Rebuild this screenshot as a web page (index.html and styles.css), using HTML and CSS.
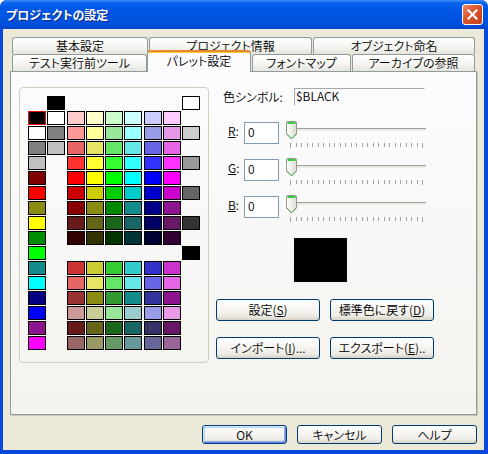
FILE: index.html
```html
<!DOCTYPE html>
<html>
<head>
  <meta charset='utf-8'>
  <title>プロジェクトの設定</title>
  <link rel="stylesheet" href="styles.css">
</head>
<body>
  <div class="window">
    <div class="titlebar">
      <span class="title">プロジェクトの設定</span>
      <span class="close">
        <svg width="11" height="11" viewBox="0 0 11 11"><path d="M1.5 1.5 L9.5 9.5 M9.5 1.5 L1.5 9.5" stroke="#fff" stroke-width="2.2" stroke-linecap="square"/></svg>
      </span>
    </div>
    <div class="frame">
      <div class="tabs">
        <div class="tab-row">
          <div class="tab" style="width:136px">基本設定</div>
          <div class="tab" style="width:163px">プロジェクト情報</div>
          <div class="tab" style="width:162px">オブジェクト命名</div>
        </div>
        <div class="tab-row">
          <div class="tab" style="width:135px">テスト実行前ツール</div>
          <div class="tab active" style="width:104px">パレット設定</div>
          <div class="tab" style="width:99px">フォントマップ</div>
          <div class="tab" style="width:123px">アーカイブの参照</div>
        </div>
      </div>
      <div class="panel">
        <div class="group">
          <div class="palette" id="palette"></div>
        </div>
        <div class="editor">
          <div class="symbol">
            <span class="symbol-label">色シンボル:</span>
            <span class="field">$BLACK</span>
          </div>
          <div class="channels">
            <div class="channel">
              <span class="channel-label"><u>R</u>:</span>
              <span class="num">0</span>
              <div class="slider">
                <div class="track"></div>
                <svg class="ticks" width="134" height="5"></svg>
                <svg class="thumb" width="11" height="19" viewBox="0 0 11 19"><use href="#thumbShape"/></svg>
              </div>
            </div>
            <div class="channel">
              <span class="channel-label"><u>G</u>:</span>
              <span class="num">0</span>
              <div class="slider">
                <div class="track"></div>
                <svg class="ticks" width="134" height="5"></svg>
                <svg class="thumb" width="11" height="19" viewBox="0 0 11 19"><use href="#thumbShape"/></svg>
              </div>
            </div>
            <div class="channel">
              <span class="channel-label"><u>B</u>:</span>
              <span class="num">0</span>
              <div class="slider">
                <div class="track"></div>
                <svg class="ticks" width="134" height="5"></svg>
                <svg class="thumb" width="11" height="19" viewBox="0 0 11 19"><use href="#thumbShape"/></svg>
              </div>
            </div>
          </div>
          <div class="preview"></div>
          <div class="buttons">
            <div class="btn big">設定(<u>S</u>)</div>
            <div class="btn big">標準色に戻す(<u>D</u>)</div>
            <div class="btn big">インポート(<u>I</u>)...</div>
            <div class="btn big">エクスポート(<u>E</u>)..</div>
          </div>
        </div>
      </div>
      <div class="actions">
        <div class="btn small default">OK</div>
        <div class="btn small">キャンセル</div>
        <div class="btn small">ヘルプ</div>
      </div>
    </div>
  </div>

  <svg width="0" height="0" class="defs">
    <defs>
      <linearGradient id="thumbFill" x1="0" y1="0" x2="1" y2="0">
        <stop offset="0" stop-color="#ffffff"/>
        <stop offset="1" stop-color="#dcdcd4"/>
      </linearGradient>
      <g id="thumbShape">
        <path d="M0.5 2 Q0.5 0.5 2 0.5 H9 Q10.5 0.5 10.5 2 V13 L5.5 18 L0.5 13 Z" fill="url(#thumbFill)" stroke="#8e9b8e"/>
        <path d="M1 13 L5.5 17.5 L10 13" fill="none" stroke="#4fae4f"/>
        <rect x="1.5" y="1" width="8" height="2" fill="#3ccb3c"/>
      </g>
    </defs>
  </svg>

  <script>
const _ = '';
const colors = [
  [_, '#000000', _, _, _, _, _, _, '#ffffff'],
  ['#000000', '#ffffff', '#ffcccc', '#ffffcc', '#ccffcc', '#ccffff', '#ccccff', '#ffccff', _],
  ['#ffffff', '#808080', '#ff9999', '#ffff99', '#99e699', '#99ffff', '#999ce6', '#e699e6', '#cccccc'],
  ['#808080', '#c0c0c0', '#e66666', '#e6e666', '#66e666', '#66e6e6', '#6666e6', '#e666e6', _],
  ['#c0c0c0', _, '#ff3333', '#ffff33', '#33ff33', '#33ffff', '#3333ff', '#ff33ff', '#999999'],
  ['#800000', _, '#ff0000', '#ffff00', '#00ff00', '#00ffff', '#0000ff', '#ff00ff', _],
  ['#ff0000', _, '#cc0000', '#cccc00', '#00cc00', '#00cccc', '#0000cc', '#cc00cc', '#666666'],
  ['#8c8c14', _, '#880000', '#8c8c14', '#008800', '#148c8c', '#000088', '#8c148c', _],
  ['#ffff00', _, '#661a1a', '#666619', '#1a661a', '#1a6666', '#000066', '#661a66', '#333333'],
  ['#008c00', _, '#330000', '#333300', '#003300', '#003333', '#000033', '#330033', _],
  ['#00ff00', _, _, _, _, _, _, _, '#000000'],
  ['#148c8c', _, '#cc3333', '#cccc33', '#33cc33', '#33cccc', '#3333cc', '#cc33cc', _],
  ['#00ffff', _, '#e66666', '#e6e666', '#66e666', '#66e6e6', '#6666e6', '#e666e6', _],
  ['#000080', _, '#993333', '#8c8c14', '#339933', '#148c8c', '#333399', '#8c148c', _],
  ['#0000ff', _, '#cc9999', '#cccc99', '#99e699', '#99cccc', '#999ce6', '#e699e6', _],
  ['#8c148c', _, '#661a1a', '#666619', '#1a661a', '#1a6666', '#333366', '#661a66', _],
  ['#ff00ff', _, '#996666', '#999966', '#669966', '#669999', '#666699', '#996699', _],
];

const palette = document.getElementById('palette');
colors.forEach((row, r) => {
  row.forEach((color, c) => {
    const cell = document.createElement('div');
    if (color) {
      cell.className = (r === 1 && c === 0) ? 'swatch selected' : 'swatch';
      cell.style.background = color;
    }
    palette.appendChild(cell);
  });
});

// slider tick marks, 0..255
document.querySelectorAll('.ticks').forEach((svg) => {
  let lines = '';
  for (let i = 0; i < 25; i++) {
    const x = Math.round(i * 5.5) + 0.5;
    const h = (i === 0 || i === 24) ? 5 : 4;
    lines += `<line x1="${x}" y1="0" x2="${x}" y2="${h}" stroke="#a3a39b"/>`;
  }
  svg.innerHTML = lines;
});
  </script>
</body>
</html>
```

FILE: styles.css
```css
body {
  margin: 0;
  background: #ffffff;
  font-family: "Noto Sans CJK JP", sans-serif;
  font-size: 12px;
  font-weight: 350;
  font-feature-settings: "palt";
  color: #000;
}
.defs {
  position: absolute;
}
.window {
  width: 488px;
  height: 454px;
  display: flex;
  flex-direction: column;
  background: #0848dd;
  border-radius: 7px 7px 0 0;
  overflow: hidden;
}
.titlebar {
  flex: none;
  height: 29px;
  display: flex;
  align-items: center;
  justify-content: space-between;
  padding: 0 5px 0 6px;
  background: linear-gradient(#3d8cf5 0, #0a63ee 3px, #0058e6 8px, #0055e3 50%, #0050dc 85%, #0044c8 100%);
}
.title {
  color: #fff;
  font-weight: bold;
  font-size: 12px;
  line-height: 14px;
  text-shadow: 1px 1px #0b2a8a;
}
.close {
  width: 21px;
  height: 21px;
  box-sizing: border-box;
  border: 1px solid #fff;
  border-radius: 3px;
  background: linear-gradient(135deg, #f08a68, #d9532c 45%, #c2401a);
  display: flex;
  align-items: center;
  justify-content: center;
}
.frame {
  flex: 1;
  margin: 0 4px 4px 3px;
  padding: 8px 0 0 7px;
  background: #ece9d8;
}
.tabs {
  margin-left: 2px;
}
.tab-row {
  display: flex;
  gap: 1px;
  height: 17px;
}
.tab {
  box-sizing: border-box;
  height: 17px;
  border: 1px solid #919b9c;
  border-bottom: 0;
  border-radius: 3px 3px 0 0;
  background: linear-gradient(#ffffff, #f6f6f3 50%, #e6e5de);
  text-align: center;
  line-height: 16px;
  white-space: nowrap;
}
.tab.active {
  height: 22px;
  margin: -4px 0 -1px -1px;
  position: relative;
  z-index: 1;
  border-top: 2px solid #e68b2c;
  box-shadow: inset 0 1px #ffc73c;
  background: #fcfcfe;
  line-height: 17px;
}
.panel {
  width: 467px;
  height: 344px;
  box-sizing: border-box;
  border: 1px solid #919b9c;
  background: linear-gradient(#fcfcfe, #f4f3ee);
  box-shadow: 1px 1px 0 #c9c7ba;
  display: flex;
  align-items: flex-start;
}
.group {
  margin: 15px 0 0 8px;
  width: 190px;
  height: 276px;
  box-sizing: border-box;
  border: 1px solid #d0d0bf;
  border-radius: 4px;
  padding: 8px 0 0 8px;
}
.palette {
  display: grid;
  grid-template-columns: 19px 20px 19px 19px 19px 20px 19px 19px 18px;
  grid-auto-rows: 14px;
  row-gap: 1px;
}
.swatch {
  width: 18px;
  height: 14px;
  box-sizing: border-box;
  border: 1px solid #000;
}
.swatch.selected {
  border-color: #e01010;
}
.editor {
  margin-left: 7px;
  padding-top: 16px;
  width: 220px;
}
.symbol {
  display: flex;
  height: 18px;
}
.symbol-label {
  width: 71px;
  padding-left: 7px;
  line-height: 18px;
}
.field {
  width: 131px;
  height: 18px;
  box-sizing: border-box;
  border: 1px solid;
  border-color: #a7a6aa #ffffff #ffffff #a7a6aa;
  padding-left: 1px;
  line-height: 14px;
}
.channels {
  display: flex;
  flex-direction: column;
  gap: 15px;
  margin-top: 16px;
}
.channel {
  display: flex;
  height: 22px;
}
.channel-label {
  width: 16px;
  padding: 1px 0 0 12px;
  line-height: 16px;
}
.num {
  width: 35px;
  height: 22px;
  box-sizing: border-box;
  border: 1px solid #7f9db9;
  background: #fff;
  padding: 1px 3px;
  line-height: 16px;
}
.slider {
  position: relative;
  width: 141px;
  height: 27px;
  margin: -1px 0 0 7px;
}
.track {
  margin: 7px 0 0 4px;
  width: 136px;
  height: 2px;
  border-top: 1px solid #9d9d99;
  background: #ecebe4;
}
.ticks {
  display: block;
  margin: 12px 0 0 4px;
}
.thumb {
  position: absolute;
  left: 0;
  top: 0;
}
.preview {
  margin: 20px 0 0 78px;
  width: 53px;
  height: 44px;
  background: #000;
}
.buttons {
  display: grid;
  grid-template-columns: 104px 104px;
  column-gap: 10px;
  row-gap: 16px;
  margin-top: 17px;
}
.btn {
  box-sizing: border-box;
  border: 1px solid #003c74;
  border-radius: 3px;
  background: linear-gradient(#ffffff, #f6f5f1 45%, #ecebe5 80%, #d6d2c6);
  text-align: center;
  white-space: nowrap;
}
.btn.big {
  height: 22px;
  line-height: 20px;
}
.btn.small {
  width: 85px;
  height: 19px;
  line-height: 17px;
}
.btn.default {
  box-shadow: inset 1px 1px #cee7ff, inset -1px -1px #6982ee, inset 2px 2px #bcd4f6, inset -2px -2px #89ade4;
}
.actions {
  display: flex;
  justify-content: flex-end;
  gap: 10px;
  width: 467px;
  margin-top: 10px;
}
```
